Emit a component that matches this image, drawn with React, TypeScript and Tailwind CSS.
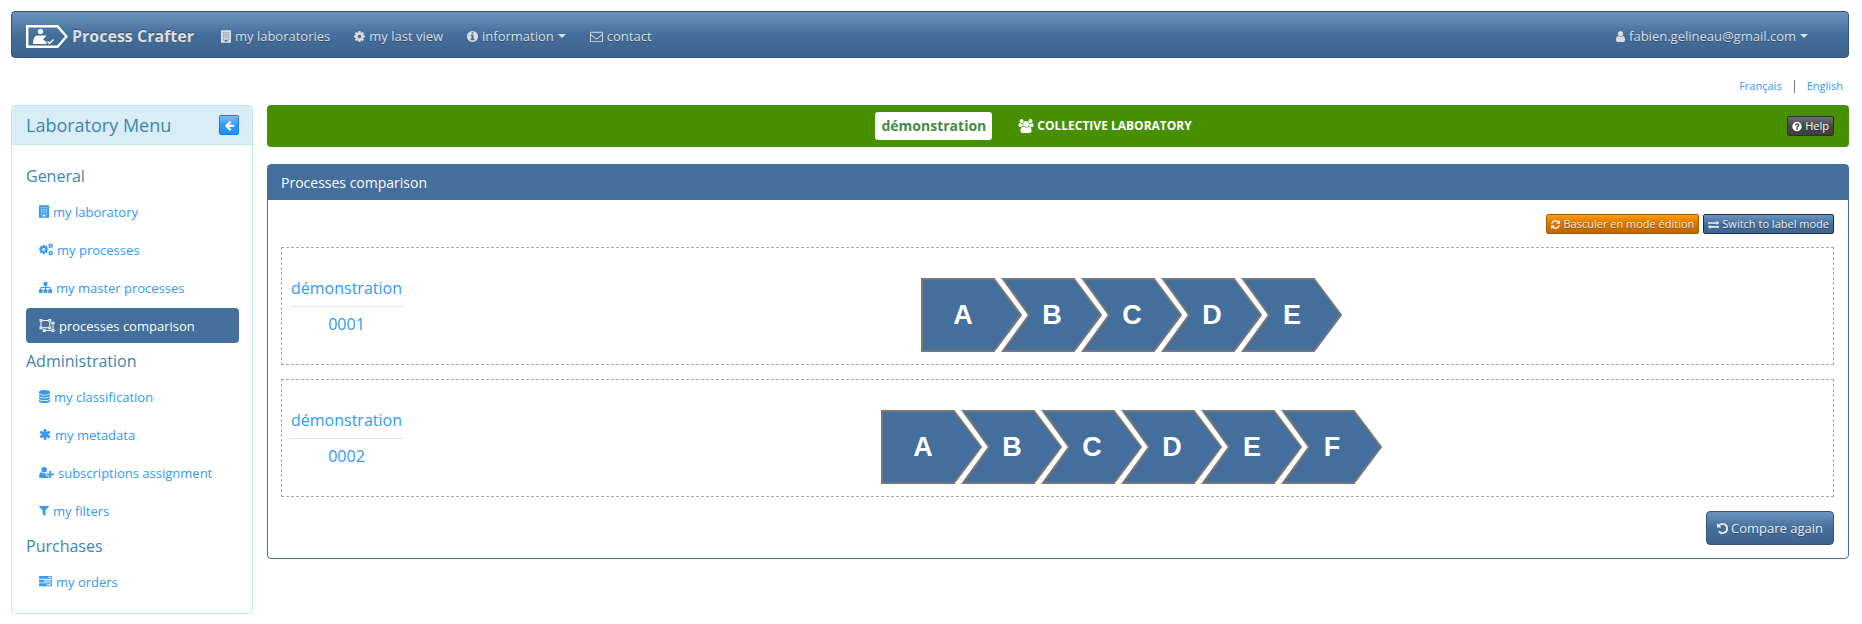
import React from "react";

type Box = { className?: string };

const P = {
  user: "M1536 1399q0 109-62.5 187t-150.5 78h-854q-88 0-150.5-78t-62.5-187q0-85 8.5-160.5t31.5-152 58.5-131 94-89 134.5-34.5q131 128 313 128t313-128q76 0 134.5 34.5t94 89 58.5 131 31.5 152 8.5 160.5zm-256-887q0 159-112.5 271.5t-271.5 112.5-271.5-112.5-112.5-271.5 112.5-271.5 271.5-112.5 271.5 112.5 112.5 271.5z",
  cog: "M1152 896q0-106-75-181t-181-75-181 75-75 181 75 181 181 75 181-75 75-181zm512-109v222q0 12-8 23t-20 13l-185 28q-19 54-39 91 35 50 107 138 10 12 10 25t-9 23q-27 37-99 108t-94 71q-12 0-26-9l-138-108q-44 23-91 38-16 136-29 186-7 28-36 28h-222q-14 0-24.5-8.5t-11.5-21.5l-28-184q-49-16-90-37l-141 107q-10 9-25 9-14 0-25-11-126-114-165-168-7-10-7-23 0-12 8-23 15-21 51-66.5t54-70.5q-27-50-41-99l-183-27q-13-2-21-12.5t-8-23.5v-222q0-12 8-23t19-13l186-28q14-46 39-92-40-57-107-138-10-12-10-24 0-10 9-23 26-36 98.5-107.5t94.5-71.5q13 0 26 10l138 107q44-23 91-38 16-136 29-186 7-28 36-28h222q14 0 24.5 8.5t11.5 21.5l28 184q49 16 90 37l142-107q9-9 24-9 13 0 25 10 129 119 165 170 7 8 7 22 0 12-8 23-15 21-51 66.5t-54 70.5q26 50 41 98l183 28q13 2 21 12.5t8 23.5z",
  info: "M1152 1376v-160q0-14-9-23t-23-9h-96v-512q0-14-9-23t-23-9h-320q-14 0-23 9t-9 23v160q0 14 9 23t23 9h96v320h-96q-14 0-23 9t-9 23v160q0 14 9 23t23 9h448q14 0 23-9t9-23zm-128-896v-160q0-14-9-23t-23-9h-192q-14 0-23 9t-9 23v160q0 14 9 23t23 9h192q14 0 23-9t9-23zm640 416q0 209-103 385.5t-279.5 279.5-385.5 103-385.5-103-279.5-279.5-103-385.5 103-385.5 279.5-279.5 385.5-103 385.5 103 279.5 279.5 103 385.5z",
  question:
    "M1024 1376v-192q0-14-9-23t-23-9h-192q-14 0-23 9t-9 23v192q0 14 9 23t23 9h192q14 0 23-9t9-23zm256-672q0-88-55.5-163t-138.5-116-170-41q-243 0-371 213-15 24 8 42l132 100q7 6 19 6 16 0 25-12 53-68 86-92 34-24 86-24 48 0 85.5 26t37.5 59q0 38-20 61t-68 45q-63 28-115.5 86.5t-52.5 125.5v36q0 14 9 23t23 9h192q14 0 23-9t9-23q0-19 21.5-49.5t54.5-49.5q32-18 49-28.5t46-35 44.5-48 28-60.5 12.5-81zm384 192q0 209-103 385.5t-279.5 279.5-385.5 103-385.5-103-279.5-279.5-103-385.5 103-385.5 279.5-279.5 385.5-103 385.5 103 279.5 279.5 103 385.5z",
  envelope:
    "M1664 1504v-768q-32 36-69 66-268 206-426 338-51 43-83 67t-86.5 48.5-102.5 24.5h-2q-48 0-102.5-24.5t-86.5-48.5-83-67q-158-132-426-338-37-30-69-66v768q0 13 9.5 22.5t22.5 9.5h1472q13 0 22.5-9.5t9.5-22.5zm0-1051v-24.5l-.5-13-3-12.5-5.5-9-9-7.5-14-2.5h-1472q-13 0-22.5 9.5t-9.5 22.5q0 168 147 284 193 152 401 317 6 5 35 29.5t46 37.5 44.5 31.5 50.5 27.5 43 9h2q20 0 43-9t50.5-27.5 44.5-31.5 46-37.5 35-29.5q208-165 401-317 54-43 100.5-115.5t46.5-131.5zm128-37v1088q0 66-47 113t-113 47h-1472q-66 0-113-47t-47-113v-1088q0-66 47-113t113-47h1472q66 0 113 47t47 113z",
  filter:
    "M1595 295q17 41-14 70l-493 493v742q0 42-39 59-13 5-25 5-27 0-45-19l-256-256q-19-19-19-45v-486l-493-493q-31-29-14-70 17-39 59-39h1280q42 0 59 39z",
  asterisk:
    "M1546 1050q46 26 59.5 77.5t-12.5 97.5l-64 110q-26 46-77.5 59.5t-97.5-12.5l-266-153v307q0 52-38 90t-90 38h-128q-52 0-90-38t-38-90v-307l-266 153q-46 26-97.5 12.5t-77.5-59.5l-64-110q-26-46-12.5-97.5t59.5-77.5l266-154-266-154q-46-26-59.5-77.5t12.5-97.5l64-110q26-46 77.5-59.5t97.5 12.5l266 153v-307q0-52 38-90t90-38h128q52 0 90 38t38 90v307l266-153q46-26 97.5-12.5t77.5 59.5l64 110q26 46 12.5 97.5t-59.5 77.5l-266 154z",
  undo: "M1664 896q0 156-61 298t-164 245-245 164-298 61q-172 0-327-72.5t-264-204.5q-7-10-6.5-22.5t8.5-20.5l137-138q10-9 25-9 16 2 23 12 73 95 179 147t225 52q104 0 198.5-40.5t163.5-109.5 109.5-163.5 40.5-198.5-40.5-198.5-109.5-163.5-163.5-109.5-198.5-40.5q-98 0-188 35.5t-160 101.5l137 138q31 30 14 69-17 40-59 40h-448q-26 0-45-19t-19-45v-448q0-42 40-59 39-17 69 14l130 129q107-101 244.5-156.5t284.5-55.5q156 0 298 61t245 164 164 245 61 298z",
  refresh:
    "M1639 1056q0 5-1 7-64 268-268 434.5t-478 166.5q-146 0-282.5-55t-243.5-157l-129 129q-19 19-45 19t-45-19-19-45v-448q0-26 19-45t45-19h448q26 0 45 19t19 45-19 45l-137 137q71 66 161 102t187 36q134 0 250-65t186-179q11-17 53-117 8-23 30-23h192q13 0 22.5 9.5t9.5 22.5zm25-800v448q0 26-19 45t-45 19h-448q-26 0-45-19t-19-45 19-45l138-138q-148-137-349-137-134 0-250 65t-186 179q-11 17-53 117-8 23-30 23h-199q-13 0-22.5-9.5t-9.5-22.5v-7q65-268 270-434.5t480-166.5q146 0 284 55.5t245 156.5l130-129q19-19 45-19t45 19 19 45z",
  exchange:
    "M1792 1184v192q0 13-9.5 22.5t-22.5 9.5h-1376v192q0 13-9.5 22.5t-22.5 9.5q-12 0-24-10l-319-320q-9-9-9-22 0-14 9-23l320-320q9-9 23-9 13 0 22.5 9.5t9.5 22.5v192h1376q13 0 22.5 9.5t9.5 22.5zm0-544q0 14-9 23l-320 320q-9 9-23 9-13 0-22.5-9.5t-9.5-22.5v-192h-1376q-13 0-22.5-9.5t-9.5-22.5v-192q0-13 9.5-22.5t22.5-9.5h1376v-192q0-14 9-23t23-9q12 0 24 10l319 319q9 9 9 23z",
  arrowLeft:
    "M1664 896v128q0 53-32.5 90.5t-84.5 37.5h-704l293 294q38 36 38 90t-38 90l-75 76q-37 37-90 37-52 0-91-37l-651-652q-37-37-37-90 0-52 37-91l651-650q38-38 91-38 52 0 90 38l75 74q38 38 38 91t-38 91l-293 293h704q52 0 84.5 37.5t32.5 90.5z",
  sitemap:
    "M1792 1248v320q0 40-28 68t-68 28h-320q-40 0-68-28t-28-68v-320q0-40 28-68t68-28h96v-192h-512v192h96q40 0 68 28t28 68v320q0 40-28 68t-68 28h-320q-40 0-68-28t-28-68v-320q0-40 28-68t68-28h96v-192h-512v192h96q40 0 68 28t28 68v320q0 40-28 68t-68 28h-320q-40 0-68-28t-28-68v-320q0-40 28-68t68-28h96v-192q0-52 38-90t90-38h512v-192h-96q-40 0-68-28t-28-68v-320q0-40 28-68t68-28h320q40 0 68 28t28 68v320q0 40-28 68t-68 28h-96v192h512q52 0 90 38t38 90v192h96q40 0 68 28t28 68z",
  database:
    "M896 768q237 0 443-43t325-127v170q0 69-103 128t-280 93.5-385 34.5-385-34.5-280-93.5-103-128v-170q119 84 325 127t443 43zm0 768q237 0 443-43t325-127v170q0 69-103 128t-280 93.5-385 34.5-385-34.5-280-93.5-103-128v-170q119 84 325 127t443 43zm0-384q237 0 443-43t325-127v170q0 69-103 128t-280 93.5-385 34.5-385-34.5-280-93.5-103-128v-170q119 84 325 127t443 43zm0-1152q208 0 385 34.5t280 93.5 103 128v128q0 69-103 128t-280 93.5-385 34.5-385-34.5-280-93.5-103-128v-128q0-69 103-128t280-93.5 385-34.5z",
  tasks:
    "M1024 1408h640v-128h-640v128zm-384-512h1024v-128h-1024v128zm640-512h384v-128h-384v128zm512 832v256q0 26-19 45t-45 19h-1664q-26 0-45-19t-19-45v-256q0-26 19-45t45-19h1664q26 0 45 19t19 45zm0-512v256q0 26-19 45t-45 19h-1664q-26 0-45-19t-19-45v-256q0-26 19-45t45-19h1664q26 0 45 19t19 45zm0-512v256q0 26-19 45t-45 19h-1664q-26 0-45-19t-19-45v-256q0-26 19-45t45-19h1664q26 0 45 19t19 45z",
  users:
    "M529 896q-162 5-265 128h-134q-82 0-138-40.5t-56-118.5q0-353 124-353 6 0 43.5 21t97.5 42.5 119 21.5q67 0 133-23-5 37-5 66 0 143 83 257zm1071 637q0 120-73 189.5t-194 69.5h-874q-121 0-194-69.5t-73-189.5q0-53 3.5-103.5t14-109 26.5-108.5 43-97.5 62-81 85.5-53.5 111.5-20q10 0 43 21.5t73 48 107 48 135 21.5 135-21.5 107-48 73-48 43-21.5q61 0 111.5 20t85.5 53.5 62 81 43 97.5 26.5 108.5 14 109 3.5 103.5zm-1024-1277q0 106-75 181t-181 75-181-75-75-181 75-181 181-75 181 75 75 181zm704 384q0 159-112.5 271.5t-271.5 112.5-271.5-112.5-112.5-271.5 112.5-271.5 271.5-112.5 271.5 112.5 112.5 271.5zm576 225q0 78-56 118.5t-138 40.5h-134q-103-123-265-128 83-114 83-257 0-29-5-66 66 23 133 23 59 0 119-21.5t97.5-42.5 43.5-21q124 0 124 353zm-128-609q0 106-75 181t-181 75-181-75-75-181 75-181 181-75 181 75 75 181z",
};

function Glyph({ box, className = "", children }: { box: string; className?: string; children: React.ReactNode }) {
  return (
    <svg aria-hidden="true" viewBox={box} fill="currentColor" className={"shrink-0 overflow-visible " + className}>
      {children}
    </svg>
  );
}

const S = "h-[13px] ";

const Building = () => {
  let d = "M64 0H1344Q1408 0 1408 64V1728Q1408 1792 1344 1792H64Q0 1792 0 1728V64Q0 0 64 0Z";
  for (let r = 0; r < 5; r++)
    for (let c = 0; c < 4; c++)
      if (!(r === 4 && (c === 1 || c === 2))) d += `M${256 + c * 256} ${256 + r * 256}v128h128v-128z`;
  d += "M512 1344v256h384v-256z";
  return (
    <Glyph box="0 0 1408 1792" className={S + "w-[10px]"}>
      <path fillRule="evenodd" d={d} />
    </Glyph>
  );
};
const Cog = () => (
  <Glyph box="128 0 1536 1792" className={S + "w-[11px]"}>
    <path d={P.cog} />
  </Glyph>
);
const Info = () => (
  <Glyph box="128 0 1536 1792" className={S + "w-[11px]"}>
    <path d={P.info} />
  </Glyph>
);
const Envelope = () => (
  <Glyph box="0 0 1792 1792" className={S + "w-[13px]"}>
    <path d={P.envelope} />
  </Glyph>
);
const User = () => (
  <Glyph box="256 0 1280 1792" className={S + "w-[9px]"}>
    <path d={P.user} />
  </Glyph>
);
const Cogs = () => (
  <Glyph box="0 0 1920 1792" className={S + "w-[14px]"}>
    <path d={P.cog} transform="translate(-107 149) scale(.833)" />
    <path d={P.cog} transform="translate(1215 -1) scale(.43)" />
    <path d={P.cog} transform="translate(1215 1023) scale(.43)" />
  </Glyph>
);
const Sitemap = () => (
  <Glyph box="0 0 1792 1792" className={S + "w-[13px]"}>
    <path d={P.sitemap} />
  </Glyph>
);
const Ungroup = () => (
  <Glyph box="0 0 2048 1792" className={S + "w-[16px]"}>
    <g fill="none" stroke="currentColor" strokeWidth="140">
      <path d="M384 192H1216M384 1216H1216M192 384V1024M1408 384V1024" />
      <path d="M1536 576H1664M1856 768V1408M832 1600H1664M640 1344V1408" />
      <path d="M64 64h256v256H64zM1280 64h256v256h-256zM64 1088h256v256H64zM1280 1088h256v256h-256z" />
      <path d="M1728 448h256v256h-256zM1728 1472h256v256h-256zM512 1472h256v256H512z" />
    </g>
  </Glyph>
);
const Database = () => (
  <Glyph box="128 0 1536 1792" className={S + "w-[11px]"}>
    <path d={P.database} />
  </Glyph>
);
const Asterisk = () => (
  <Glyph box="64 0 1664 1792" className={S + "w-[12px]"}>
    <path d={P.asterisk} />
  </Glyph>
);
const UserPlus = () => (
  <Glyph box="0 0 2048 1792" className={S + "w-[15px]"}>
    <path d="M704 896a384 384 0 1 1 0-768 384 384 0 0 1 0 768zM1664 1024h352q32 0 32 32v192q0 32-32 32h-352v352q0 32-32 32h-192q-32 0-32-32v-352h-352q-32 0-32-32v-192q0-32 32-32h352V672q0-32 32-32h192q32 0 32 32z" />
    <path d="M928 1248q0 66 47 113t113 47h224v238q-60 18-122 18H267Q0 1664 0 1405 0 960 260 864q65-24 118 18 150 142 326 142t326-142q45-34 112-20 60 10 110 34H1088q-66 0-113 47t-47 113z" />
  </Glyph>
);
const Filter = () => (
  <Glyph box="192 0 1408 1792" className={S + "w-[10px]"}>
    <path d={P.filter} />
  </Glyph>
);
const Tasks = () => (
  <Glyph box="0 0 1792 1792" className={S + "w-[13px]"}>
    <path d={P.tasks} />
  </Glyph>
);
const Caret = () => (
  <Glyph box="0 0 8 4" className="h-1 w-2">
    <path d="M0 0H8L4 4Z" />
  </Glyph>
);
const Logo = ({ className = "" }: Box) => (
  <svg aria-hidden="true" viewBox="0 0 42 23" className={"h-[23px] w-[42px] shrink-0 " + className}>
    <path d="M1.200 1.200H31.500L40.500 11.500L31.500 21.800H1.200Z" fill="none" stroke="#fff" strokeWidth="2.400" />
    <circle cx="14.500" cy="6.500" r="2.600" fill="#fff" />
    <path d="M7 19C7 13 9 10.500 12 10.500H20.500L17 14.500L20.500 17V19Z" fill="#fff" />
    <path d="M21.500 16.500L23.500 18.500L27.500 14.500" fill="none" stroke="#fff" strokeWidth="1.500" />
  </svg>
);

const blueGradient = "bg-[linear-gradient(#6d94bf,#446e9b_50%,#3e648d)]";
const navLink = "flex items-center gap-1 text-[#ddd] text-shadow-[0_1px_0_rgba(0,0,0,0.3)]";
const smallButton =
  "flex h-5 cursor-pointer items-center gap-[3px] rounded-[2px] border px-1 text-[11px] leading-4 text-shadow-[0_1px_0_rgba(0,0,0,0.3)]";

const menu = [
  {
    title: "General",
    items: [
      { label: "my laboratory", icon: <Building /> },
      { label: "my processes", icon: <Cogs /> },
      { label: "my master processes", icon: <Sitemap /> },
      { label: "processes comparison", icon: <Ungroup />, active: true },
    ],
  },
  {
    title: "Administration",
    items: [
      { label: "my classification", icon: <Database /> },
      { label: "my metadata", icon: <Asterisk /> },
      { label: "subscriptions assignment", icon: <UserPlus /> },
      { label: "my filters", icon: <Filter /> },
    ],
  },
  { title: "Purchases", items: [{ label: "my orders", icon: <Tasks /> }] },
];

function Chevrons({ steps }: { steps: string[] }) {
  const width = 22 + steps.length * 80;
  return (
    <svg viewBox={`0 0 ${width} 74`} width={width} height="74" role="img" aria-label={steps.join(", ")}>
      {steps.map((s, i) => {
        const x = i * 80;
        return (
          <g key={s}>
            <path
              d={
                i === 0
                  ? "M1 1H73L100 37L73 73H1Z"
                  : `M${x + 2} 1H${x + 73}L${x + 100} 37L${x + 73} 73H${x + 2}L${x + 28} 37Z`
              }
              fill="#446e9b"
              stroke="#777"
              strokeWidth="2"
            />
            <text
              x={i === 0 ? 42 : x + 51}
              y="46"
              textAnchor="middle"
              fill="#fff"
              className="font-['Liberation_Sans',Arial,sans-serif] text-[27px] font-bold"
            >
              {s}
            </text>
          </g>
        );
      })}
    </svg>
  );
}

function ProcessRow({ code, steps }: { code: string; steps: string[] }) {
  return (
    <section className="flex h-[118px] items-center border border-dashed border-[#aaa] pl-2">
      <a href="#process" className="mr-7 shrink-0 text-center text-base leading-[22px] text-[#3399f3]">
        <span className="block border-b border-[#e5e5e5] px-px pb-[7px]">démonstration</span>
        <span className="block pt-[6px]">{code}</span>
      </a>
      <div className="flex min-w-0 flex-1 justify-center pt-[18px]">
        <Chevrons steps={steps} />
      </div>
    </section>
  );
}

export default function App() {
  return (
    <div className="bg-white pt-[11px] pr-[13px] pb-[11px] pl-[11px] font-['Open_Sans','Noto_Sans',sans-serif] text-[13px] leading-[18px] text-[#777]">
      <nav className={"flex h-[47px] items-center rounded-[4px] border border-[#345578] pr-10 pl-[14px] " + blueGradient}>
        <a
          href="#home"
          className="mr-[27px] flex items-center gap-1 pt-1 text-[16px] leading-[22px] font-bold text-[#ddd] text-shadow-[0_-1px_0_rgba(0,0,0,0.3)]"
        >
          <Logo />
          <span className="pb-0.5">Process Crafter</span>
        </a>
        <div className="flex flex-1 items-center gap-6 pt-[3px]">
          <a href="#labs" className={navLink}>
            <Building />
            my laboratories
          </a>
          <a href="#last" className={navLink}>
            <Cog />
            my last view
          </a>
          <a href="#info" className={navLink}>
            <Info />
            information
            <Caret />
          </a>
          <a href="#contact" className={navLink}>
            <Envelope />
            contact
          </a>
        </div>
        <a href="#account" className={navLink + " pt-[3px]"}>
          <User />
          fabien.gelineau@gmail.com
          <Caret />
        </a>
      </nav>

      <div className="flex h-[47px] items-center justify-end pt-[9px] pr-[6px] text-[11px] text-[#3399f3]">
        <a href="#fr">Français</a>
        <span className="mx-3 h-[13px] w-px bg-[#777]" />
        <a href="#en">English</a>
      </div>

      <div className="flex items-start gap-[14px]">
        <aside className="w-[242px] shrink-0 rounded-[4px] border border-[#bce8f1] pb-[14px]">
          <header className="flex h-[39px] items-center justify-between border-b border-[#bce8f1] bg-[#d9edf7] pr-[13px] pl-[14px]">
            <h2 className="text-lg text-[#3a87ad]">Laboratory Menu</h2>
            <button
              type="button"
              aria-label="Collapse menu"
              className="flex size-5 cursor-pointer items-center justify-center rounded-[2px] border border-[#0e80e5] bg-[linear-gradient(#7bbdf7,#3399f3_50%,#208ff2)] text-white"
            >
              <Glyph box="0 0 1792 1792" className="size-[11px]">
                <path d={P.arrowLeft} />
              </Glyph>
            </button>
          </header>
          <div className="pt-[13px] pr-[13px] pl-[14px]">
            {menu.map((group) => (
              <section key={group.title}>
                <h3 className="py-[5px] text-base leading-[26px] text-[#3a87ad]">{group.title}</h3>
                <ul className="flex flex-col gap-[3px]">
                  {group.items.map((item) => (
                    <li key={item.label}>
                      <a
                        href="#menu"
                        className={
                          "flex h-[35px] items-center gap-1 rounded-[4px] px-[13px] " +
                          ("active" in item && item.active ? "bg-[#446e9b] text-white" : "text-[#3399f3]")
                        }
                      >
                        {item.icon}
                        {item.label}
                      </a>
                    </li>
                  ))}
                </ul>
              </section>
            ))}
          </div>
        </aside>

        <main className="min-w-0 flex-1">
          <div className="flex h-[42px] items-center rounded-[4px] bg-[#479100] pr-[15px] pl-[13px] text-white">
            <div className="flex flex-1 items-center justify-center gap-[26px] font-bold">
              <span className="rounded-[3px] bg-white px-[6px] py-1 text-[14px] leading-5 text-[#468847]">démonstration</span>
              <span className="flex items-center gap-[3px] text-[12px]">
                <Glyph box="-64 0 1920 1792" className="h-[14px] w-4">
                  <path d={P.users} />
                </Glyph>
                COLLECTIVE LABORATORY
              </span>
            </div>
            <button
              type="button"
              className={smallButton + " border-[#2e2f2f] bg-[linear-gradient(#6d7070,#474949_50%,#3d3f3f)] text-white"}
            >
              <Glyph box="128 0 1536 1792" className="h-[11px] w-[10px]">
                <path d={P.question} />
              </Glyph>
              Help
            </button>
          </div>

          <section className="mt-[17px] rounded-[4px] border border-[#446e9b]">
            <h1 className="bg-[#446e9b] px-[13px] py-2 text-[14px] leading-[19px] text-white">Processes comparison</h1>
            <div className="pt-[14px] pr-[14px] pb-[13px] pl-[13px]">
              <div className="mb-[13px] flex justify-end gap-1">
                <button
                  type="button"
                  className={smallButton + " border-[#a65c00] bg-[linear-gradient(#ff9c08,#d47500_50%,#bd6800)] text-[#eee]"}
                >
                  <Glyph box="128 0 1536 1792" className="h-[11px] w-[9px]">
                    <path d={P.refresh} />
                  </Glyph>
                  Basculer en mode édition
                </button>
                <button type="button" className={smallButton + " border-[#1c2e45] text-[#eee] " + blueGradient}>
                  <Glyph box="0 0 1792 1792" className="size-[11px]">
                    <path d={P.exchange} />
                  </Glyph>
                  Switch to label mode
                </button>
              </div>
              <div className="flex flex-col gap-[14px]">
                <ProcessRow code="0001" steps={["A", "B", "C", "D", "E"]} />
                <ProcessRow code="0002" steps={["A", "B", "C", "D", "E", "F"]} />
                <div className="flex justify-end">
                  <button
                    type="button"
                    className={
                      "flex h-[34px] cursor-pointer items-center gap-[3px] rounded-[4px] border border-[#345578] px-[10px] text-[#eee] text-shadow-[0_1px_0_rgba(0,0,0,0.3)] " +
                      blueGradient
                    }
                  >
                    <Glyph box="128 0 1536 1792" className="h-[13px] w-[11px]">
                      <path d={P.undo} />
                    </Glyph>
                    Compare again
                  </button>
                </div>
              </div>
            </div>
          </section>
        </main>
      </div>
    </div>
  );
}
